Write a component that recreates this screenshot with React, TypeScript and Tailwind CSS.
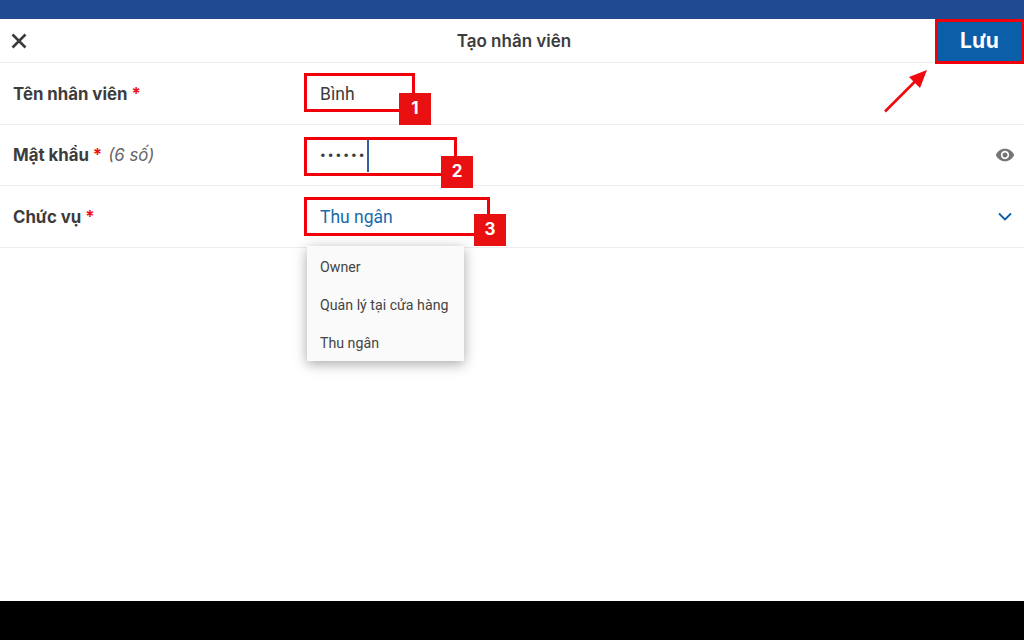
export default function App() {
  const box = "absolute border-[3px] border-[#f00008] pointer-events-none";
  const badge = "absolute bg-[#e81010] text-white font-bold text-[17px] flex items-center justify-center w-[32px] h-[32px]";
  return (
    <div className="relative w-[1024px] h-[640px] overflow-hidden bg-white flex flex-col font-['Inter',sans-serif] text-[#3c3c3c]">
      <div className="h-[19px] bg-[#214b91] shrink-0" />
      <header className="h-[44px] shrink-0 flex items-center border-b border-[#eeeeee]">
        <div className="w-[89px] pl-[11px]">
          <svg width="16" height="16" viewBox="0 0 16 16" fill="none" stroke="#3a3a3a" strokeWidth="2.6">
            <path d="M1.5 1.5 14.5 14.5M14.5 1.5 1.5 14.5" />
          </svg>
        </div>
        <h1 className="flex-1 text-center text-[17px] font-semibold pl-[4px] pt-[2px]">Tạo nhân viên</h1>
        <button className="w-[89px] h-[44px] bg-[#0b5ea8] text-white text-[21px] font-bold">Lưu</button>
      </header>
      <div className="h-[62px] shrink-0 flex items-center border-b border-[#eeeeee] pt-[2px]">
        <div className="w-[320px] pl-[13px] text-[16.8px] font-bold">Tên nhân viên <span className="text-[#ee1111]">*</span></div>
        <div className="text-[17.5px] font-['Roboto',sans-serif]">Bình</div>
      </div>
      <div className="h-[61px] shrink-0 flex items-center border-b border-[#eeeeee] pt-[2px]">
        <div className="w-[320px] pl-[13px] text-[16.8px] font-bold">Mật khẩu <span className="text-[#ee1111]">*</span> <span className="font-normal italic text-[#666666] ml-[2px]">(6 số)</span></div>
        <div className="flex-1 flex items-center">
          <span className="text-[17px] tracking-[2px] font-['Roboto',sans-serif]">••••••</span>
          <span className="w-[2px] h-[34px] bg-[#34609f] mb-[2px] ml-[1px]" />
        </div>
        <svg className="mr-[9px] mb-[2px]" width="20" height="20" viewBox="0 0 24 24" fill="#757575">
          <path d="M12 4.5C7 4.5 2.73 7.61 1 12c1.73 4.39 6 7.5 11 7.5s9.27-3.11 11-7.5c-1.73-4.39-6-7.5-11-7.5zM12 17c-2.76 0-5-2.24-5-5s2.24-5 5-5 5 2.24 5 5-2.24 5-5 5zm0-8c-1.66 0-3 1.34-3 3s1.34 3 3 3 3-1.34 3-3-1.34-3-3-3z" />
        </svg>
      </div>
      <div className="h-[62px] shrink-0 flex items-center border-b border-[#eeeeee] pt-[2px]">
        <div className="w-[320px] pl-[13px] text-[16.8px] font-bold">Chức vụ <span className="text-[#ee1111]">*</span></div>
        <div className="flex-1 text-[17.5px] text-[#1a69ad] font-['Roboto',sans-serif]">Thu ngân</div>
        <svg className="mr-[12px] mb-[2px]" width="14" height="9" viewBox="0 0 14 9" fill="none" stroke="#0b5ea8" strokeWidth="1.8">
          <path d="M1 1.5 7 7.5 13 1.5" />
        </svg>
      </div>
      <div className="flex-1 bg-white" />
      <div className="h-[39px] bg-black shrink-0" />

      <ul className="absolute left-[307px] top-[246px] w-[157px] h-[115px] bg-[#fafafa] shadow-[0_3px_12px_rgba(0,0,0,0.35)] flex flex-col font-['Roboto',sans-serif] text-[14.2px] text-[#444444] pt-[2px]">
        <li className="h-[38px] flex items-center pl-[13px] pt-[2px]">Owner</li>
        <li className="h-[38px] flex items-center pl-[13px] pt-[2px]">Quản lý tại cửa hàng</li>
        <li className="h-[38px] flex items-center pl-[13px] pt-[2px]">Thu ngân</li>
      </ul>

      <div className={box + " left-[304px] top-[73px] w-[111px] h-[39px]"} />
      <div className={badge + " left-[399px] top-[93px]"}>1</div>
      <div className={box + " left-[304px] top-[137px] w-[153px] h-[39px]"} />
      <div className={badge + " left-[441px] top-[156px]"}>2</div>
      <div className={box + " left-[304px] top-[197px] w-[186px] h-[39px]"} />
      <div className={badge + " left-[474px] top-[214px]"}>3</div>
      <div className={box + " left-[935px] top-[19px] w-[89px] h-[45px]"} />
      <svg className="absolute left-[880px] top-[65px]" width="52" height="52" viewBox="0 0 52 52" fill="#ee0a0f">
        <path d="M5 46.5 36 15.5" stroke="#ee0a0f" strokeWidth="2.6" />
        <path d="M47 5 29 12 40 23Z" />
      </svg>
    </div>
  );
}
